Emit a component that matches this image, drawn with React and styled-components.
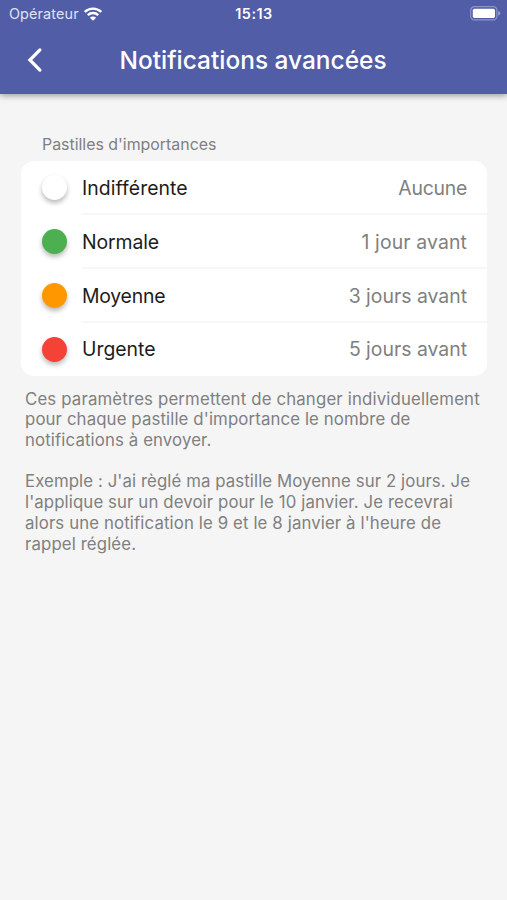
import styled, { createGlobalStyle } from 'styled-components'

const levels = [
  { name: 'Indifférente', color: '#ffffff', value: 'Aucune', spacing: '0.08px', valueSpacing: '-0.25px' },
  { name: 'Normale', color: '#4caf50', value: '1 jour avant', spacing: '-0.1px', valueSpacing: '0.13px' },
  { name: 'Moyenne', color: '#ff9800', value: '3 jours avant', spacing: '-0.22px', valueSpacing: '0' },
  { name: 'Urgente', color: '#f44336', value: '5 jours avant', spacing: '0', valueSpacing: '0' },
]

const WifiIcon = () => (
  <svg width='18' height='14' viewBox='0 0 18 14' fill='none' stroke='#fff' strokeWidth='2.4'>
    <path d='M0.8 5A11.6 11.6 0 0 1 17.2 5' />
    <path d='M3.8 8.2A7.4 7.4 0 0 1 14.2 8.2' />
    <path d='M9 13.8L5.9 10.7A4.4 4.4 0 0 1 12.1 10.7Z' fill='#fff' stroke='none' />
  </svg>
)

const BatteryIcon = () => (
  <svg width='31' height='15' viewBox='0 0 31 15' fill='none'>
    <rect x='0.7' y='0.7' width='26.2' height='13.2' rx='3.6' stroke='#fff' strokeOpacity='0.35' strokeWidth='1.2' />
    <rect x='2.8' y='2.7' width='22.2' height='9.2' rx='1.6' fill='#fff' />
    <path d='M28.2 5C31 5.8 31 8.8 28.2 9.6Z' fill='#fff' fillOpacity='0.4' />
  </svg>
)

const BackIcon = () => (
  <svg width='16' height='26' viewBox='0 0 16 26' fill='none' stroke='#fff' strokeWidth='3.2' strokeLinecap='round'>
    <path d='M12.9 2.9L2.9 13L12.9 23.1' />
  </svg>
)

export default function App() {
  return (
    <Screen>
      <GlobalStyle />
      <Header>
        <StatusBar>
          <Carrier>
            <span>Opérateur</span>
            <WifiIcon />
          </Carrier>
          <Clock>15:13</Clock>
          <Battery>
            <BatteryIcon />
          </Battery>
        </StatusBar>
        <NavBar>
          <BackButton aria-label='Retour'>
            <BackIcon />
          </BackButton>
          <Title>Notifications avancées</Title>
        </NavBar>
      </Header>

      <Content>
        <SectionTitle>Pastilles d'importances</SectionTitle>
        <Card>
          {levels.map(level => (
            <Row key={level.name}>
              <Dot $color={level.color} />
              <RowBody>
                <Name $spacing={level.spacing}>{level.name}</Name>
                <Value $spacing={level.valueSpacing}>{level.value}</Value>
              </RowBody>
            </Row>
          ))}
        </Card>
        <Help>
          <Line $spacing='0.16px'>Ces paramètres permettent de changer individuellement</Line>
          <Line>pour chaque pastille d'importance le nombre de</Line>
          <Line>notifications à envoyer.</Line>
        </Help>
        <Help>
          <Line $spacing='0.09px'>Exemple : J'ai règlé ma pastille Moyenne sur 2 jours. Je</Line>
          <Line $spacing='0.11px'>l'applique sur un devoir pour le 10 janvier. Je recevrai</Line>
          <Line>alors une notification le 9 et le 8 janvier à l'heure de</Line>
          <Line>rappel réglée.</Line>
        </Help>
      </Content>
    </Screen>
  )
}

const GlobalStyle = createGlobalStyle`
  * {
    box-sizing: border-box;
  }

  body {
    margin: 0;
    background: #f5f5f5;
    font-family: Inter, Roboto, sans-serif;
  }
`

const Screen = styled.div`
  width: 507px;
  height: 900px;
  overflow: hidden;
  background: #f5f5f5;
`

const Header = styled.header`
  height: 94px;
  background: #515da7;
  color: #fff;
  box-shadow: 0 2px 6px rgba(0, 0, 0, 0.35);
`

const StatusBar = styled.div`
  display: grid;
  grid-template-columns: 1fr auto 1fr;
  align-items: center;
  height: 27px;
  padding: 0 6px 0 9px;
`

const Carrier = styled.div`
  display: flex;
  align-items: center;
  gap: 5.5px;
  font-size: 14.4px;
  letter-spacing: 0.12px;
  color: #dfe2f3;
`

const Clock = styled.div`
  margin-right: 2px;
  font-size: 14.4px;
  font-weight: 600;
  letter-spacing: 0.5px;
`

const Battery = styled.div`
  display: flex;
  justify-content: flex-end;
`

const NavBar = styled.div`
  display: grid;
  grid-template-columns: 70px 1fr 71px;
  align-items: center;
  height: 66px;
`

const BackButton = styled.button`
  display: flex;
  padding: 0 0 0 27px;
  border: 0;
  background: none;
`

const Title = styled.h1`
  margin: 0;
  font-size: 24.4px;
  font-weight: 500;
  letter-spacing: 0.03px;
  line-height: 30px;
  text-align: center;
  white-space: nowrap;
`

const Content = styled.main`
  padding: 41px 20px 0 21px;
`

const SectionTitle = styled.h2`
  margin: 0;
  padding-left: 21px;
  font-size: 15.9px;
  font-weight: 400;
  line-height: 20px;
  color: #808080;
`

const Card = styled.ul`
  margin: 6px 0 12.6px;
  padding: 0;
  border-radius: 13px;
  background: #fff;
  list-style: none;
`

const RowBody = styled.div`
  display: flex;
  flex: 1;
  align-items: center;
  justify-content: space-between;
  height: 100%;
  padding: 2px 20px 0 0;
  border-bottom: 2px solid #f7f7f7;
`

const Row = styled.li`
  display: flex;
  align-items: center;
  height: 54px;
  padding-left: 21px;

  &:last-child {
    height: 53px;
  }

  &:last-child ${RowBody} {
    padding-top: 0;
    border-bottom-color: transparent;
  }
`

const Dot = styled.span`
  width: 25px;
  height: 25px;
  margin: 0 15px 1px 0;
  border-radius: 50%;
  background: ${props => props.$color};
  box-shadow: 0 3px 5px rgba(0, 0, 0, 0.28);
`

const Name = styled.span`
  font-size: 19.4px;
  letter-spacing: ${props => props.$spacing};
  color: #1c1c1c;
`

const Value = styled.span`
  font-size: 19.4px;
  letter-spacing: ${props => props.$spacing};
  color: #808080;
`

const Help = styled.p`
  margin: 0 0 20.7px;
  padding-left: 4px;
  font-size: 16.8px;
  line-height: 20.7px;
  color: #808080;
`

const Line = styled.span`
  display: block;
  letter-spacing: ${props => props.$spacing || '0.12px'};
  white-space: nowrap;
`
